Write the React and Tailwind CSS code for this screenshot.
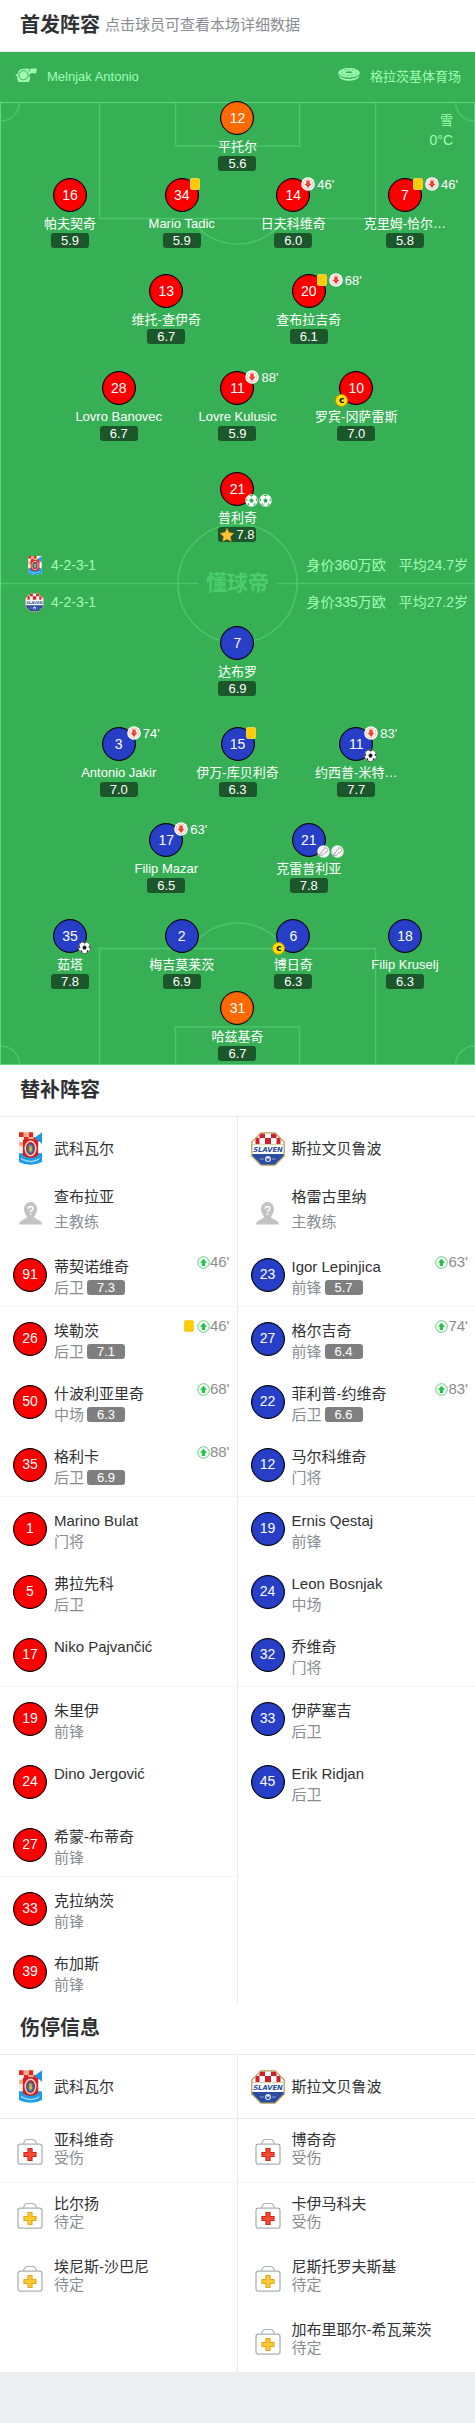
const RED = "bg-[#fa0000]";
const BLUE = "bg-[#263fc6]";
const ORANGE = "bg-[#ff6a00]";

const HOME_ROWS = [
  { width: "w-full", cols: "grid-cols-1", top: "", players: [{ no: 12, name: "平托尔", rating: "5.6", keeper: true }] },
  {
    width: "w-[94%]", cols: "grid-cols-4", top: "mt-[7px]",
    players: [
      { no: 16, name: "帕夫契奇", rating: "5.9" },
      { no: 34, name: "Mario Tadic", rating: "5.9", card: true },
      { no: 14, name: "日夫科维奇", rating: "6.0", off: "46'" },
      { no: 7, name: "克里姆-恰尔…", rating: "5.8", card: true, off: "46'" },
    ],
  },
  {
    width: "w-3/5", cols: "grid-cols-2", top: "mt-[26px]",
    players: [
      { no: 13, name: "维托-查伊奇", rating: "6.7" },
      { no: 20, name: "查布拉吉奇", rating: "6.1", card: true, off: "68'" },
    ],
  },
  {
    width: "w-3/4", cols: "grid-cols-3", top: "mt-[27px]",
    players: [
      { no: 28, name: "Lovro Banovec", rating: "6.7" },
      { no: 11, name: "Lovre Kulusic", rating: "5.9", off: "88'" },
      { no: 10, name: "罗宾-冈萨雷斯", rating: "7.0", captain: true },
    ],
  },
  { width: "w-full", cols: "grid-cols-1", top: "mt-[31px]", players: [{ no: 21, name: "普利奇", rating: "7.8", star: true, extras: ["pen", "pen"] }] },
];

const AWAY_ROWS = [
  { width: "w-full", cols: "grid-cols-1", top: "", players: [{ no: 7, name: "达布罗", rating: "6.9" }] },
  {
    width: "w-3/4", cols: "grid-cols-3", top: "mt-[31px]",
    players: [
      { no: 3, name: "Antonio Jakir", rating: "7.0", off: "74'" },
      { no: 15, name: "伊万-库贝利奇", rating: "6.3", card: true },
      { no: 11, name: "约西普-米特…", rating: "7.7", off: "83'", extras: ["goal"] },
    ],
  },
  {
    width: "w-3/5", cols: "grid-cols-2", top: "mt-[26px]",
    players: [
      { no: 17, name: "Filip Mazar", rating: "6.5", off: "63'" },
      { no: 21, name: "克雷普利亚", rating: "7.8", extras: ["assist", "assist"] },
    ],
  },
  {
    width: "w-[94%]", cols: "grid-cols-4", top: "mt-[26px]",
    players: [
      { no: 35, name: "茹塔", rating: "7.8", extras: ["goal"] },
      { no: 2, name: "梅吉莫莱茨", rating: "6.9" },
      { no: 6, name: "博日奇", rating: "6.3", captain: true },
      { no: 18, name: "Filip Kruselj", rating: "6.3" },
    ],
  },
  { width: "w-full", cols: "grid-cols-1", top: "mt-[2px]", players: [{ no: 31, name: "哈兹基奇", rating: "6.7", keeper: true }] },
];

const HOME_SUBS = [
  { no: 91, name: "蒂契诺维奇", pos: "后卫", rating: "7.3", on: "46'" },
  { no: 26, name: "埃勒茨", pos: "后卫", rating: "7.1", on: "46'", card: true },
  { no: 50, name: "什波利亚里奇", pos: "中场", rating: "6.3", on: "68'" },
  { no: 35, name: "格利卡", pos: "后卫", rating: "6.9", on: "88'" },
  { no: 1, name: "Marino Bulat", pos: "门将" },
  { no: 5, name: "弗拉先科", pos: "后卫" },
  { no: 17, name: "Niko Pajvančić", pos: "" },
  { no: 19, name: "朱里伊", pos: "前锋" },
  { no: 24, name: "Dino Jergović", pos: "" },
  { no: 27, name: "希蒙-布蒂奇", pos: "前锋" },
  { no: 33, name: "克拉纳茨", pos: "前锋" },
  { no: 39, name: "布加斯", pos: "前锋" },
];

const AWAY_SUBS = [
  { no: 23, name: "Igor Lepinjica", pos: "前锋", rating: "5.7", on: "63'" },
  { no: 27, name: "格尔吉奇", pos: "前锋", rating: "6.4", on: "74'" },
  { no: 22, name: "菲利普-约维奇", pos: "后卫", rating: "6.6", on: "83'" },
  { no: 12, name: "马尔科维奇", pos: "门将" },
  { no: 19, name: "Ernis Qestaj", pos: "前锋" },
  { no: 24, name: "Leon Bosnjak", pos: "中场" },
  { no: 32, name: "乔维奇", pos: "门将" },
  { no: 33, name: "伊萨塞吉", pos: "后卫" },
  { no: 45, name: "Erik Ridjan", pos: "后卫" },
];

const HOME_INJURIES = [
  { name: "亚科维奇", status: "受伤" },
  { name: "比尔扬", status: "待定" },
  { name: "埃尼斯-沙巴尼", status: "待定" },
];

const AWAY_INJURIES = [
  { name: "博奇奇", status: "受伤" },
  { name: "卡伊马科夫", status: "受伤" },
  { name: "尼斯托罗夫斯基", status: "待定" },
  { name: "加布里耶尔-希瓦莱茨", status: "待定" },
];

function HomeCrest({ className }) {
  return (
    <svg viewBox="0 0 24 34" className={className} aria-hidden="true">
      <path d="M0 0h24v31q-6 3-12 3T0 31z" fill="#fff" />
      <path d="M0 0h5v5H0zM10 0h5v5h-5zM5 5h5v5H5zM15 5h3v3h-3z" fill="#dd2a20" />
      <path d="M5 0h5v5H5zM0 10h4v5H0zM10 5h5v3h-5z" fill="#f3a98c" />
      <path d="M0 5h5v5H0zM15 0h5v5h-5zM0 15h4v5H0z" fill="#fdf1ec" />
      <path d="M24 0v12l-8-6z" fill="#1f97e6" />
      <path d="M0 22h24v9q-6 3-12 3T0 31z" fill="#1b9bea" />
      <path d="M4 8q8-2 16 0v16q-8 6-16 0z" fill="#d3201c" />
      <ellipse cx="12" cy="17" rx="5.500" ry="7.500" fill="#b3252a" stroke="#f0d8d4" strokeWidth="1.600" />
      <ellipse cx="12" cy="17.500" rx="3.300" ry="5.300" fill="#2c7db4" />
      <path d="M11 13.500l2 1 .8 3.500-1.500 3.500-1.600-2.500z" fill="#d9b83a" />
      <path d="M2.500 27.500q9.500 6 19 0" fill="none" stroke="#d9f0ff" strokeWidth="1.500" strokeDasharray="1.500 .7" />
    </svg>
  );
}

function AwayCrest({ className }) {
  return (
    <svg viewBox="0 0 34 34" className={className} aria-hidden="true">
      <path d="M10 .8h14l9.200 9.200v14L24 33.200H10L.8 24V10z" fill="#fff" />
      <path d="M8.500 1.500H14V6H8.500zM20 1.500h5.500V6H20zM14 6h6v6h-6zM4.500 6.500l.5-.5h3.500v6H4.500zM25.500 6H29l.5.500V12h-4z" fill="#d0202c" />
      <path d="M1 22h32v2l-9 9H10l-9-9z" fill="#2a4da2" />
      <path d="M1 12.500h32" stroke="#c9b778" strokeWidth=".6" />
      <circle cx="17" cy="27" r="3" fill="#dfe6f5" />
      <path d="M15 26l2 1 2-1-1 3h-2z" fill="#2a4da2" />
      <path d="M9 27h4M21 27h4" stroke="#aebde0" strokeWidth="1.200" strokeDasharray="1.500 .6" />
      <path d="M10 .8h14l9.200 9.200v14L24 33.200H10L.8 24V10z" fill="none" stroke="#b89f5f" strokeWidth="1.300" />
      <text x="17" y="19.500" textAnchor="middle" fontFamily="DejaVu Sans" fontWeight="bold" fontStyle="italic" fontSize="6.800" fill="#244b9f">SLAVEN</text>
    </svg>
  );
}

function Whistle() {
  return (
    <svg viewBox="0 0 22 14" className="h-[14px] w-[22px]" aria-hidden="true">
      <path d="M0 7l2.500-1A6.500 6.500 0 0 1 9 .7L22 .5l-1 5-4.500-.5-2.500 2A6.300 6.300 0 1 1 2.500 8.500z" fill="#a0fdb6" />
      <circle cx="8.500" cy="7.200" r="4.600" fill="none" stroke="#37af55" strokeWidth="1" />
      <path d="M14.500 0l-.5 3.500" stroke="#37af55" />
    </svg>
  );
}

function Stadium() {
  return (
    <svg viewBox="0 0 22 13" className="h-[13px] w-[22px]" aria-hidden="true">
      <ellipse cx="11" cy="5" rx="10.800" ry="5" fill="#a0fdb6" />
      <ellipse cx="11" cy="4.500" rx="7.500" ry="2.900" fill="none" stroke="#37af55" strokeWidth=".7" strokeDasharray="3 1" />
      <ellipse cx="11" cy="4.300" rx="3.500" ry="1" fill="#37af55" />
      <path d="M.5 7Q4 11 11 11t10.500-4q-.5 3-4 4.500Q11 14 4.500 11.500 1 10 .5 7z" fill="#a0fdb6" />
      <path d="M.5 6.500Q4 10 11 10t10.500-3.500" fill="none" stroke="#37af55" strokeWidth=".8" />
    </svg>
  );
}

function YellowCard() {
  return <span className="h-3 w-[10px] shrink-0 rounded-[2px] border border-[#f0d24a] bg-[#ffcc00]" />;
}

function OffIcon() {
  return (
    <svg viewBox="0 0 14 14" className="size-[14px] shrink-0" aria-label="换下" role="img">
      <circle cx="7" cy="7" r="6.800" fill="#fff" />
      <circle cx="7" cy="7" r="5" fill="none" stroke="#f5a79c" strokeWidth=".8" />
      <path d="M5.300 3.500h3.400v3.300h1.800L7 11 3.500 6.800h1.800z" fill="#f5402a" />
    </svg>
  );
}

function OnIcon() {
  return (
    <svg viewBox="0 0 14 14" className="size-[13px] shrink-0" aria-label="换上" role="img">
      <circle cx="7" cy="7" r="6.200" fill="#fff" stroke="#3cc45f" strokeWidth=".9" />
      <path d="M5.200 10.800h3.600V7.300h2L7 3 3.200 7.300h2z" fill="#1fc748" />
    </svg>
  );
}

function Ball({ green }) {
  const ink = green ? "#2fa84f" : "#1a1a1a";
  return (
    <svg viewBox="0 0 14 14" className="size-[13px]" aria-hidden="true">
      <circle cx="7" cy="7" r="6.500" fill="#fff" stroke={green ? "#d9f7e0" : "#3a3a3a"} strokeWidth=".6" />
      <path d="M7 4.700l2.300 1.700-.9 2.700H5.600l-.9-2.700z" fill={ink} />
      <path d="M4.600 1.200h4.800L7 2.800zM12.500 4.500l.8 3.500-2-1.500zM1.500 4.500L.7 8l2-1.500zM10 9.800l1.500 1L9 13zM4 9.800l-1.500 1L5 13z" fill={ink} />
    </svg>
  );
}

function Boot() {
  return (
    <svg viewBox="0 0 14 14" className="size-[13px]" aria-hidden="true">
      <circle cx="7" cy="7" r="6.700" fill="#f4f4f6" />
      <path d="M9 2.500l3 2.500-1 2-3 1.500-2 2.500-3 .8-.8-1.300 3-2.500L7 5l1-.5z" fill="#fff" stroke="#8d8d95" strokeWidth=".8" />
      <path d="M2.500 10L5 9" stroke="#8d8d95" strokeWidth=".6" />
    </svg>
  );
}

function Star() {
  return (
    <svg viewBox="0 0 14 14" className="size-[14px]" aria-hidden="true">
      <path d="M7 .5l2 4.200 4.700.6-3.400 3.200.8 4.700L7 11l-4.100 2.200.8-4.700L.3 5.300 5 4.700z" fill="#ffc533" stroke="#f39a1c" strokeWidth=".7" strokeLinejoin="round" />
    </svg>
  );
}

function Avatar() {
  return (
    <svg viewBox="0 0 23 23" className="size-[23px]" aria-hidden="true">
      <path d="M11.500 0a6.500 6.500 0 0 1 6.500 6.500c0 4-1.500 6-3 8 0 3 8 3 8 8H0c0-5 8-5 8-8-1.500-2-3-4-3-8A6.500 6.500 0 0 1 11.500 0z" fill="#c3c3c3" />
      <path d="M9.300 6.800q0-2.300 2.300-2.300t2.300 2q0 1.200-1.200 1.900-1.100.7-1.100 1.900M11.600 11.500v1.600" fill="none" stroke="#fff" strokeWidth="1.500" />
    </svg>
  );
}

function MedKit({ injured }) {
  return (
    <svg viewBox="0 0 26 27" className="h-[27px] w-[26px]" aria-hidden="true">
      <path d="M6.500 6Q7.500 1.500 10.500 1.500h5Q18.500 1.500 19.500 6" fill="none" stroke="#a9b2b8" strokeWidth="1.200" />
      <rect x="1" y="6.200" width="24" height="20" rx="2.500" fill="#fff" stroke="#a9b2b8" strokeWidth="1.300" />
      <path d="M11 10.500h4v4h4v4h-4v4h-4v-4H7v-4h4z" fill={injured ? "#fb4a33" : "#fecb2e"} stroke={injured ? "#cf2a1c" : "#e6a620"} strokeWidth="1.200" />
    </svg>
  );
}

function Rating({ value, star }) {
  return (
    <span className="flex h-[15px] w-[38px] items-center justify-center gap-[2px] rounded-[3px] bg-black/50 text-[13px] leading-[15px] text-white">
      {star && <Star />}
      {value}
    </span>
  );
}

function Shirt({ no, color }) {
  return (
    <span className={`flex size-[34px] items-center justify-center rounded-full border border-black text-[14px] text-white shadow-[inset_0_0_1px_#000] ${color}`}>
      {no}
    </span>
  );
}

function PitchPlayer({ player, color }) {
  return (
    <button type="button" className="flex flex-col items-center">
      <span className="relative">
        <Shirt no={player.no} color={player.keeper ? ORANGE : color} />
        {(player.card || player.off) && (
          <span className="absolute -top-px left-[25px] flex h-[14px] items-center gap-[2px]">
            {player.card && <YellowCard />}
            {player.off && <OffIcon />}
            {player.off && <span className="text-[13px] leading-[13px] text-white">{player.off}</span>}
          </span>
        )}
        {player.extras && (
          <span className="absolute -bottom-px left-[25px] flex gap-px">
            {player.extras.map((kind, i) => (kind === "assist" ? <Boot key={i} /> : <Ball key={i} green={kind === "pen"} />))}
          </span>
        )}
        {player.captain && (
          <span className="absolute -bottom-[2px] -left-1 flex size-[13px] items-center justify-center rounded-full border border-[#b8961a] bg-[#ffe000] font-['DejaVu_Sans'] text-[9px] leading-none font-bold text-black">
            c
          </span>
        )}
      </span>
      <span className="mt-[3px] text-[13px] leading-[18px] whitespace-nowrap text-white">{player.name}</span>
      <Rating value={player.rating} star={player.star} />
    </button>
  );
}

function PitchRows({ rows, color }) {
  return rows.map((row, i) => (
    <div key={i} className={`mx-auto grid justify-items-center ${row.width} ${row.cols} ${row.top}`}>
      {row.players.map((p) => <PitchPlayer key={p.name} player={p} color={color} />)}
    </div>
  ));
}

function PitchLines() {
  return (
    <svg viewBox="0 0 475 963" preserveAspectRatio="none" className="size-full" fill="none" stroke="#4cc56b" strokeWidth="1.500" aria-hidden="true">
      <path d="M99.500 0v116.500h276V0M175.500 0v44h124V0" />
      <path d="M99.500 963V846.500h276V963M175.500 963v-38h124v38" />
      <path d="M190.500 116.500a56 56 0 0 0 94 0M190.500 846.500a56 56 0 0 1 94 0" />
      <path d="M19.500 0a19 19 0 0 1-19 19M455.500 0a19 19 0 0 0 19 19M19.500 963a19 19 0 0 0-19-19M455.500 963a19 19 0 0 1 19-19" />
      <circle cx="237.500" cy="481.500" r="59.500" />
      <path d="M0 481.500h198M277 481.500h198" />
      <rect x=".5" y=".5" width="474" height="962" stroke="#5fd97f" strokeWidth="1" />
    </svg>
  );
}

function FormationRow({ crest, formation, value, age }) {
  return (
    <div className="flex h-[37px] items-center pr-[7px] pl-[25px] text-[14px] text-[#a0fdb6]">
      <span className="flex w-[19px] justify-center">{crest}</span>
      <span className="ml-[7px]">{formation}</span>
      <span className="ml-auto">{value}</span>
      <span className="ml-[13px]">{age}</span>
    </div>
  );
}

function SectionHeader({ title, note }) {
  return (
    <div className="flex h-[52px] items-center border-b border-[#eaeaea] bg-white pl-5">
      <h2 className="text-[20px] leading-[51px] font-bold text-[#303133]">{title}</h2>
      {note && <p className="ml-[5px] text-[15px] text-[#888d92]">{note}</p>}
    </div>
  );
}

function Row({ icon, line, children }) {
  return (
    <div className={`flex ${line ? `h-16 border-b ${line}` : "h-[63px]"}`}>
      <span className="mr-[7px] ml-[13px] flex w-[34px] shrink-0 items-center justify-center">{icon}</span>
      {children}
    </div>
  );
}

function TeamRow({ crest, name, line }) {
  return (
    <Row icon={crest} line={line}>
      <h3 className="self-center text-[15px] leading-5 text-[#303133]">{name}</h3>
    </Row>
  );
}

function SubsColumn({ crest, team, coach, subs, color, className }) {
  return (
    <div className={className}>
      <TeamRow crest={crest} name={team} />
      <Row icon={<span className="pt-1"><Avatar /></span>}>
        <div className="flex flex-col pt-1 text-[15px] leading-[25px]">
          <span className="text-[#303133]">{coach}</span>
          <span className="text-[#888d92]">主教练</span>
        </div>
      </Row>
      {subs.map((p, i) => (
        <Row key={p.name} icon={<Shirt no={p.no} color={color} />} line={i % 3 === 0 ? "border-[#f5f5f5]" : ""}>
          <div className="flex flex-col pt-[13px] text-[15px] leading-[21px]">
            <span className="whitespace-nowrap text-[#303133]">{p.name}</span>
            <span className="flex items-center gap-[3px] text-[#888d92]">
              {p.pos}
              {p.rating && <Rating value={p.rating} />}
            </span>
          </div>
          {p.on && (
            <span className="mr-[7px] ml-auto flex h-5 items-center pt-[18px] text-[15px] text-[#8c8c8c]">
              {p.card && <span className="mr-[3px] flex"><YellowCard /></span>}
              <OnIcon />
              {p.on}
            </span>
          )}
        </Row>
      ))}
    </div>
  );
}

function InjuryColumn({ crest, team, players, className }) {
  return (
    <div className={className}>
      <TeamRow crest={crest} name={team} line="border-[#eaeaea]" />
      {players.map((p, i) => (
        <Row key={p.name} icon={<span className="pt-[2px]"><MedKit injured={p.status === "受伤"} /></span>} line={i === 0 ? "border-[#f5f5f5]" : ""}>
          <div className="flex flex-col pt-3 text-[15px] leading-[18px]">
            <span className="whitespace-nowrap text-[#303133]">{p.name}</span>
            <span className="text-[#888d92]">{p.status}</span>
          </div>
        </Row>
      ))}
    </div>
  );
}

export default function App() {
  const home = <HomeCrest className="h-[33px] w-[23px]" />;
  const away = <AwayCrest className="size-[34px]" />;
  return (
    <div className="min-h-screen bg-[#eeeff1] font-['Liberation_Sans','Noto_Sans_CJK_SC',sans-serif]" lang="zh-CN">
      <section>
        <SectionHeader title="首发阵容" note="点击球员可查看本场详细数据" />
        <div className="bg-[#37af55]">
          <div className="flex h-[49px] items-center justify-between pr-[14px] pl-[15px] text-[13px] text-[#a0fdb6]">
            <span className="flex items-center gap-[10px]"><span className="pb-1"><Whistle /></span>Melnjak Antonio</span>
            <span className="flex items-center gap-[10px]"><span className="pb-1"><Stadium /></span>格拉茨基体育场</span>
          </div>
          <div className="relative pb-1">
            <div className="absolute inset-x-0 top-px bottom-0"><PitchLines /></div>
            <div className="absolute top-[10px] right-[22px] text-right text-[#a0fdb6]">
              <p className="text-[13px] leading-5">雪</p>
              <p className="text-[14px] leading-[18px]">0°C</p>
            </div>
            <div className="absolute inset-0 flex items-center justify-center text-[21px] font-bold text-[#4bcd6e]">懂球帝</div>
            <div className="relative">
              <PitchRows rows={HOME_ROWS} color={RED} />
              <div className="py-[5px]">
                <FormationRow crest={<HomeCrest className="h-[19px] w-[14px]" />} formation="4-2-3-1" value="身价360万欧" age="平均24.7岁" />
                <FormationRow crest={<AwayCrest className="size-[19px]" />} formation="4-2-3-1" value="身价335万欧" age="平均27.2岁" />
              </div>
              <PitchRows rows={AWAY_ROWS} color={BLUE} />
            </div>
          </div>
        </div>
      </section>

      <section>
        <SectionHeader title="替补阵容" />
        <div className="grid grid-cols-2 bg-white">
          <SubsColumn crest={home} team="武科瓦尔" coach="查布拉亚" subs={HOME_SUBS} color={RED} className="border-r border-[#eaeaea]" />
          <SubsColumn crest={away} team="斯拉文贝鲁波" coach="格雷古里纳" subs={AWAY_SUBS} color={BLUE} />
        </div>
      </section>

      <section>
        <SectionHeader title="伤停信息" />
        <div className="grid grid-cols-2 bg-white">
          <InjuryColumn crest={home} team="武科瓦尔" players={HOME_INJURIES} className="border-r border-[#eaeaea]" />
          <InjuryColumn crest={away} team="斯拉文贝鲁波" players={AWAY_INJURIES} />
        </div>
      </section>
    </div>
  );
}
